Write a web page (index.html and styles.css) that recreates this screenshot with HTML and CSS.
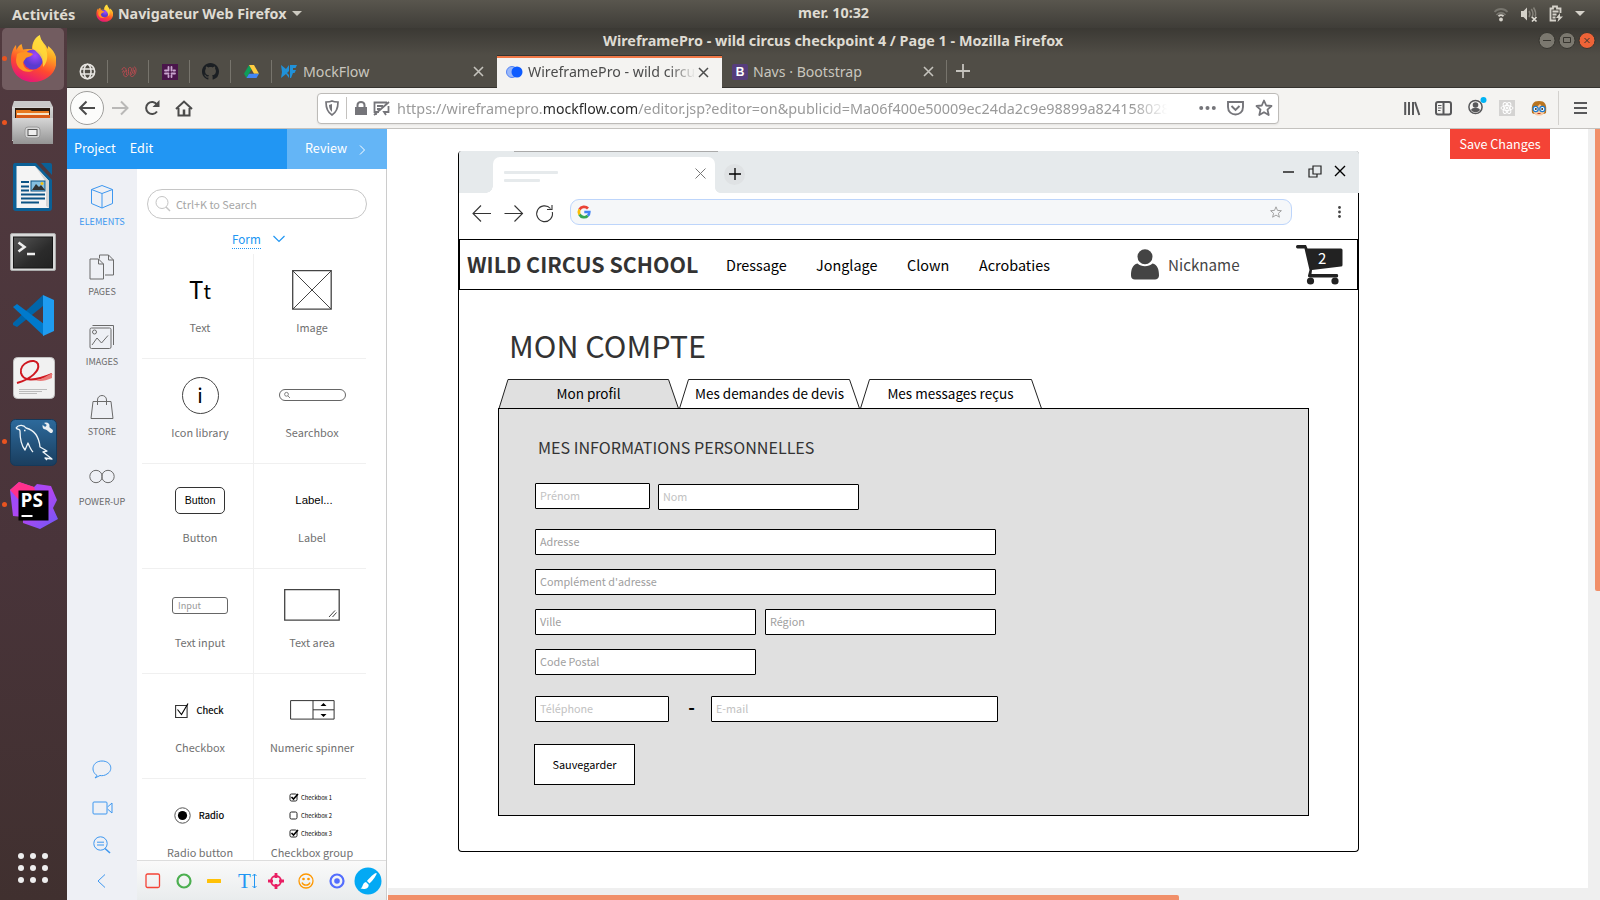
FILE: index.html
```html
<!DOCTYPE html>
<html lang="fr">
<head>
<meta charset="utf-8">
<title>WireframePro</title>
<link rel="stylesheet" href="styles.css">
</head>
<body>
<svg width="0" height="0" class="defs">
  <defs>
    <linearGradient id="fx" x1="0.7" y1="0" x2="0.3" y2="1"><stop offset="0" stop-color="#fff44f"/><stop offset=".35" stop-color="#ffa722"/><stop offset=".65" stop-color="#ff4a2e"/><stop offset="1" stop-color="#e3127f"/></linearGradient>
    <radialGradient id="fxg" cx=".6" cy=".3"><stop offset="0" stop-color="#a347ff"/><stop offset="1" stop-color="#5a3bd0"/></radialGradient>
    <linearGradient id="ps" x1="0" y1="0" x2="1" y2="1"><stop offset="0" stop-color="#8a50ff"/><stop offset=".5" stop-color="#b345f1"/><stop offset="1" stop-color="#6a5af8"/></linearGradient>
    <linearGradient id="grey" x1="0" y1="0" x2="0" y2="1"><stop offset="0" stop-color="#d6d6d6"/><stop offset="1" stop-color="#949494"/></linearGradient>
    <linearGradient id="term" x1="0" y1="0" x2="1" y2="1"><stop offset="0" stop-color="#555"/><stop offset=".6" stop-color="#2b2b2b"/><stop offset="1" stop-color="#222"/></linearGradient>
    <linearGradient id="sea" x1="0" y1="0" x2="0" y2="1"><stop offset="0" stop-color="#2d6a9c"/><stop offset="1" stop-color="#1a3e5f"/></linearGradient>
    <symbol id="firefox" viewBox="0 0 46 48">
      <path fill="url(#fx)" d="M23 48C10 48 1 38.500 1 26C1 20 3 14 6 11l.5 5c1-3 3-5 5-6l1.500 5.500c3-1 6-.5 9-.5c0-6 3-12 8-14c0 4 3 7 6 11l1.500 3 .8-3c5 4 8.200 9 8.200 15c0 12-10 21-23.500 21z"/>
      <circle cx="23" cy="25.500" r="10" fill="url(#fxg)"/>
      <path fill="#ff9422" d="M7 20c3-2 10-3 16 0c-1 2-5 3-7 4c-1 2-3 3-3 5c1 6 6 8 11 7c-8 5-18-1-18-10z"/>
      <path fill="#ffdc3c" d="M30 2c0 5 6 9 7 17c1 6-1 11-4 14c1-8-4-14-10-18c-1-5 2-11 7-13z" opacity=".85"/>
    </symbol>
  </defs>
</svg>

<header class="topbar">
  <span class="activities">Activités</span>
  <svg class="mini-fox" width="17" height="18"><use href="#firefox"/></svg>
  <span class="app">Navigateur Web Firefox</span>
  <svg width="10" height="6"><path d="M0 0h10l-5 5z" fill="#ccc9c0"/></svg>
  <span class="clock">mer. 10:32</span>
  <div class="tray">
    <svg width="16" height="16" viewBox="0 0 16 16" fill="none" stroke-width="1.800"><path stroke="#77756e" d="M1.500 6c3.500-4 9.500-4 13 0M3.500 9c2.500-3 6.500-3 9 0"/><path stroke="#d5d2ca" d="M5.500 10.200c1.500-1.300 3.500-1.300 5 0"/><circle cx="8" cy="13.500" r="1.900" fill="#d5d2ca"/></svg>
    <svg width="18" height="16" viewBox="0 0 18 16"><path fill="#d5d2ca" d="M1 5h2.500L7 1.500v13L3.500 11H1z"/><path fill="none" stroke="#85827a" stroke-width="1.500" d="M9 5c1.300 2 1.300 4 0 6M11.300 3c2 3 2 6.500 0 9M13.500 1.500c2.500 4 2.500 7 1.500 9"/><path stroke="#e0ddd5" stroke-width="1.700" d="M12 11l4.500 4.500m0-4.500L12 15.500"/></svg>
    <svg width="14" height="17" viewBox="0 0 14 17"><path fill="none" stroke="#d5d2ca" stroke-width="1.800" d="M7 15.500H1.500v-12H4V1.500h4v2h3.500V8M3.500 6.500h6M3.500 9.500h4M3.500 12.500h3"/><path fill="#d5d2ca" d="M11 8l-4 5h2.500L8.500 17 14 11.500h-3z"/></svg>
    <svg width="10" height="6"><path d="M0 0h10l-5 5z" fill="#d5d2ca"/></svg>
  </div>
</header>

<div class="desktop">
<nav class="dock">
  <div class="slot fox on"><svg width="46" height="48"><use href="#firefox"/></svg></div>
  <div class="slot files on"><svg width="44" height="46" viewBox="0 0 44 46"><path fill="#c9c9c9" d="M3 1h36l3 6v34H1V7z"/><path fill="url(#grey)" d="M1 7h41v33H1z"/><path fill="#2b1c12" d="M4 8h35v10H4z"/><path fill="#e8781e" d="M5 10h14l2 1h17v4H5z"/><path fill="#f6e3c6" d="M6 13h32v2H6z"/><path fill="#d95b17" d="M5 15h34v3H5z"/><path fill="url(#grey)" d="M2 18h40v26H2z"/><rect x="14" y="27" width="15" height="11" rx="3" fill="#d6d6d6" stroke="#999"/><rect x="17" y="29.500" width="9" height="6" fill="#eee" stroke="#555"/></svg></div>
  <div class="slot writer"><svg width="42" height="50" viewBox="0 0 42 50"><path fill="#0b6096" d="M3 1h21l16 17v28q0 3-3 3H4q-3 0-3-3V4q0-3 2-3z"/><path fill="#0b6096" d="M29 1h9q2 0 2 2v10z"/><path fill="#f4f4f4" d="M4.500 4H23l14 15v27H4.500z"/><path fill="#d4d4d4" d="M23 4l14 15v27l-3-2V20z"/><g stroke="#0b5384" stroke-width="2"><path d="M9 20h8M9 24.500h8M9 28.500h8M9 32.500h24M9 36.500h24M9 40.500h18"/></g><rect x="19" y="19" width="14" height="10" fill="#85bfe0" stroke="#0b5384"/><path fill="#333" d="M20 28l4-6 3 3 2-2 4 5z"/><circle cx="30" cy="21.500" r="1.500" fill="#f5c211"/></svg></div>
  <div class="slot term"><svg width="46" height="39" viewBox="0 0 46 39"><rect x=".5" y=".5" width="45" height="37" rx="1.500" fill="#d9d9d9" stroke="#aaa"/><rect x="3.500" y="4" width="39" height="31" fill="url(#term)" stroke="#161616"/><path fill="none" stroke="#eee" stroke-width="2.600" d="M8.500 9.500l6 4.500-6 4.500M17 21h8"/></svg></div>
  <div class="slot code"><svg width="43" height="43" viewBox="0 0 43 43"><path fill="#0065a9" d="M1 29l30-28v11L5 33l-4-2z"/><path fill="#007acc" d="M1 13l4-3 27 20v12z"/><path fill="#1f9cf0" d="M31 1l11 5v31l-11 5z"/></svg></div>
  <div class="slot reader"><svg width="42" height="43" viewBox="0 0 42 43"><rect x=".5" y=".5" width="41" height="41" rx="4" fill="#f1f1f1" stroke="#c2c2c2"/><path fill="none" stroke="#cf1820" stroke-width="2" d="M4 26c14-4 23-12 21-19c-3-7-19-1-17 9c2 8 12 9 31 1"/><path fill="#ea7a78" d="M22 23c7 0 13-5 17-7v5c-7 3-12 4-17 2z"/><path stroke="#bbb" d="M6 32.500h28M6 34.500h23M6 36.500h18"/></svg></div>
  <div class="slot sql on"><svg width="47" height="47" viewBox="0 0 47 47"><rect x=".5" y=".5" width="46" height="46" rx="5" fill="url(#sea)" stroke="#15395a"/><path fill="none" stroke="#eef4f8" stroke-width="1.300" stroke-linejoin="round" d="M6 9c3-4 8-3 10 0c8 2 13 9 14 19l7 4-4 1 9 7-7-1 2 2M6 9c2 2 4 1 4 3c0 8 1 14 5 19l3-7c2 5 3 7 5 9M14 11.500h1.500"/><path stroke="#e9eef2" stroke-width="4" stroke-linecap="round" d="M36 8l5 4"/><circle cx="36" cy="7" r="3.500" fill="#e9eef2"/><path stroke="#2d6a9c" stroke-width="2.500" d="M32 4l4 3"/></svg></div>
  <div class="slot storm on"><svg width="49" height="49" viewBox="0 0 49 49"><path fill="url(#ps)" d="M1 9L10 1l15 5 3-3 14 2 6 14-4 8 5 11-18 10-17-6v-6l-10-1z"/><path fill="#ff318c" d="M1 9L10 1l15 5 2 6-18 6z"/><rect x="9.500" y="9.500" width="30" height="30"/><path stroke="#fff" stroke-width="2" d="M12.500 35h11"/><text x="11.500" y="26" class="ps-text">PS</text></svg></div>
  <svg class="grid-dots" width="32" height="32" viewBox="0 0 32 32" fill="#eee"><circle cx="4" cy="4" r="3"/><circle cx="16" cy="4" r="3"/><circle cx="28" cy="4" r="3"/><circle cx="4" cy="16" r="3"/><circle cx="16" cy="16" r="3"/><circle cx="28" cy="16" r="3"/><circle cx="4" cy="28" r="3"/><circle cx="16" cy="28" r="3"/><circle cx="28" cy="28" r="3"/></svg>
</nav>

<main class="window">
  <div class="titlebar">
    <span class="wtitle">WireframePro - wild circus checkpoint 4 / Page 1 - Mozilla Firefox</span>
    <div class="wbtns"><svg width="58" height="20" viewBox="0 0 58 20"><circle cx="9" cy="9.500" r="8" fill="#7b786f" stroke="#36352f"/><circle cx="29" cy="9.500" r="8" fill="#7b786f" stroke="#36352f"/><circle cx="49" cy="9.500" r="8" fill="#ee6337" stroke="#36352f"/><path fill="none" stroke="#37352f" d="M5 9.500h8M25.500 6.500h7v5h-7zM46.500 7l5 5m0-5l-5 5"/></svg></div>
  </div>

  <div class="tabs">
    <div class="pin"><svg width="17" height="17" viewBox="0 0 17 17" fill="none" stroke="#e8e6e2" stroke-width="1.600"><circle cx="8.500" cy="8.500" r="7.200"/><ellipse cx="8.500" cy="8.500" rx="3.500" ry="7.200"/><path d="M2 6h13M2 11h13"/></svg></div>
    <div class="pin"><svg width="16" height="12" viewBox="0 0 16 12" fill="none" stroke="#b84a50" stroke-width="1"><path d="M1 4c0-3 4-3 4-.5S1.500 7 3 9.500s4 .5 4.500-2S6.500 2 8.500 1.500s2.500 2 1.500 4-1.500 4.500.5 5 4.500-3 4.500-6-1-3.500-2-3.500M1.500 6.500C2 4 3.500 4 3 6M5.500 9c0-2 .5-3 0-5M10 9c1-2 3-4 2-7.500M12.500 8c1-1 1-3 1-4"/></svg></div>
    <div class="pin"><svg width="16" height="16" viewBox="0 0 16 16"><path fill="#4a154b" d="M0 0h16v16H0z"/><g fill="none" stroke="#c9a6cf" stroke-width="1.800" stroke-linecap="round"><path d="M6.500 3v3.500M3 6.500h2M9.500 3v3.500M11.500 6.500H13M3 9.500h3.500M6.500 11.500V13M9.500 9.500H13M9.500 11.500V13"/></g></svg></div>
    <div class="pin"><svg width="17" height="17" viewBox="0 0 16 16"><path fill="#1b1f23" d="M8 0C3.580 0 0 3.580 0 8c0 3.540 2.290 6.530 5.470 7.590.4.070.55-.17.55-.38 0-.19-.01-.82-.01-1.490-2.010.37-2.530-.49-2.690-.94-.09-.23-.48-.94-.82-1.130-.28-.15-.68-.52-.01-.53.630-.01 1.080.58 1.230.82.720 1.210 1.870.87 2.330.66.070-.52.28-.87.510-1.070-1.780-.2-3.640-.89-3.640-3.950 0-.87.31-1.590.82-2.150-.08-.2-.36-1.020.08-2.120 0 0 .67-.21 2.200.82.640-.18 1.320-.27 2-.27s1.360.09 2 .27c1.530-1.040 2.200-.82 2.200-.82.440 1.100.16 1.920.08 2.120.510.56.82 1.270.82 2.150 0 3.070-1.870 3.750-3.650 3.950.29.25.54.73.54 1.480 0 1.070-.01 1.930-.01 2.200 0 .21.15.46.55.38A8.010 8.010 0 0 0 16 8c0-4.420-3.580-8-8-8z"/></svg></div>
    <div class="pin"><svg width="15" height="13" viewBox="0 0 15 13"><path fill="#0f9d58" d="M5 0l2.500 4.300L2.500 13 0 8.700z"/><path fill="#ffcd40" d="M5 0h5l5 8.700h-5z"/><path fill="#4285f4" d="M5 8.700h10L12.500 13h-10z"/></svg></div>
    <div class="tab"><svg width="17" height="15" viewBox="0 0 17 15"><path fill="#2091d9" d="M0 1l5 4 3-4v6L6 9l2 2v3L5 10l-5 4 1-6zM9 1h7l-1.500 3H12v2h3l-1.500 3H12l-2 5H9z"/></svg><span class="tlabel">MockFlow</span><svg class="close" width="11" height="11"><path stroke="#c5c3bd" stroke-width="1.600" d="M1 1l9 9m0-9l-9 9"/></svg></div>
    <div class="tab active"><svg width="17" height="12" viewBox="0 0 17 12"><circle cx="6" cy="6" r="5.500" fill="#9ab8fa" stroke="#5484f5"/><circle cx="11" cy="6" r="5.500" fill="#0d5bff"/></svg><span class="tlabel">WireframePro - wild circu</span><svg class="close" width="11" height="11"><path stroke="#4d4d4d" stroke-width="1.500" d="M1 1l9 9m0-9l-9 9"/></svg></div>
    <div class="tab nav"><span class="bs">B</span><span class="tlabel">Navs · Bootstrap</span><svg class="close" width="11" height="11"><path stroke="#c5c3bd" stroke-width="1.600" d="M1 1l9 9m0-9l-9 9"/></svg></div>
    <svg class="plus" width="14" height="14"><path stroke="#c5c3bd" stroke-width="1.800" d="M7 0v14M0 7h14"/></svg>
  </div>

  <div class="toolbar">
    <span class="back"><svg width="18" height="16" fill="none" stroke="#4b4b4b" stroke-width="2"><path d="M17 8H2M8.500 1.500L2 8l6.500 6.500"/></svg></span>
    <svg class="fwd" width="18" height="16" fill="none" stroke="#b9b8b7" stroke-width="2"><path d="M0 8h15.500M9 1.500L15.500 8 9 14.500"/></svg>
    <svg class="reload" width="16" height="16" fill="none" stroke="#4b4b4b" stroke-width="2"><path d="M13 11.500A6 6 0 1 1 13 4.500"/><path fill="#4b4b4b" stroke="none" d="M15.500 0v7h-7z"/></svg>
    <svg class="home" width="18" height="17" fill="none" stroke="#4b4b4b" stroke-width="2"><path d="M1 9l8-7.500L17 9M3.500 8v7.500h11V8"/><path stroke-width="2.500" d="M9 15.500V9.500"/></svg>
    <div class="url">
      <svg class="u-shield" width="14" height="16" fill="none" stroke="#75757a" stroke-width="1.700"><path d="M7 1c2 1 4 1 6 1c0 6-1 10-6 13C2 12 1 8 1 2c2 0 4 0 6-1z"/><path fill="#75757a" stroke="none" d="M7 4v8c-2-2-3-4-3-7z"/></svg>
      <i class="u-sep"></i>
      <svg class="u-lock" width="12" height="14"><path fill="#75757a" d="M0 6h12v8H0z"/><path fill="none" stroke="#75757a" stroke-width="2" d="M2.500 7V4a3.500 3 0 0 1 7 0v3"/></svg>
      <svg class="u-perm" width="17" height="15" fill="none" stroke="#75757a" stroke-width="1.800"><path d="M6 11H3v3M3 11H1.500V1.500H14M15.500 5v6H11l2 3M4 5h6M4 8h3M1 14L16 1"/></svg>
      <span class="utext">https://wireframepro.<b>mockflow.com</b><span class="path">/editor.jsp?editor=on&amp;publicid=Ma06f400e50009ec24da2c9e98899a824158028</span></span>
      <svg class="u-dots" width="17" height="4" fill="#75757a"><circle cx="2.200" cy="2" r="2"/><circle cx="8.500" cy="2" r="2"/><circle cx="14.800" cy="2" r="2"/></svg>
      <svg class="u-pocket" width="17" height="15" fill="none" stroke="#75757a" stroke-width="1.900"><path d="M1 1h15v5c0 10-15 10-15 0z"/><path d="M4.500 5l4 4 4-4"/></svg>
      <svg class="u-star" width="18" height="18" viewBox="0 0 18 18" fill="none" stroke="#75757a" stroke-width="1.800"><path stroke-linejoin="round" d="M9 1.500l2.200 5 5.300.5-4 3.600 1.200 5.400L9 13.200 4.300 16l1.200-5.400-4-3.600 5.300-.5z"/></svg>
    </div>
    <svg class="t-lib" width="16" height="15" stroke="#58585a" stroke-width="2"><path d="M1.200 1v13M5 1v13M9 1v13M11 1l4.300 13"/></svg>
    <svg class="t-side" width="17" height="15" fill="none" stroke="#58585a" stroke-width="2"><rect x="1" y="1" width="15" height="12.500" rx="2"/><path d="M8.500 1v12"/><path stroke-width="1" d="M3 4.500h3.500M3 7h3.500M3 9.500h2.500"/></svg>
    <svg class="t-acc" width="20" height="20" viewBox="0 0 20 20"><circle cx="8.500" cy="11" r="6.600" fill="none" stroke="#58585a" stroke-width="1.500"/><circle cx="8.500" cy="9" r="2.800" fill="#58585a"/><path fill="#58585a" d="M4 14c1-3 8-3 9 0c-2 3-7 3-9 0z"/><circle cx="16.500" cy="4" r="3" fill="#00b3f4"/></svg>
    <svg class="t-react" width="16" height="16" viewBox="0 0 16 16" fill="none" stroke="#fff"><path fill="#d4d3d2" stroke="none" d="M0 0h16v16H0z"/><ellipse cx="8" cy="8" rx="6" ry="2.500"/><ellipse cx="8" cy="8" rx="6" ry="2.500" transform="rotate(60 8 8)"/><ellipse cx="8" cy="8" rx="6" ry="2.500" transform="rotate(120 8 8)"/><circle cx="8" cy="8" r="1" fill="#fff"/></svg>
    <svg class="t-face" width="16" height="16" viewBox="0 0 16 16"><path fill="#b9741f" d="M1 13C0 4 2 1 8 1s8 3 7 12l-2 1H3z"/><path fill="#f8c9a0" d="M2.500 8c3-1 5-2 6.500-4 1 2 3 3 4.500 4v4c-1 3-3 3.500-5.500 3.500s-4.500-.5-5.500-3.500z"/><circle cx="4.600" cy="9" r="2.600" fill="#fff" stroke="#1c7bd0" stroke-width="1.300"/><circle cx="11.400" cy="9" r="2.600" fill="#fff" stroke="#1c7bd0" stroke-width="1.300"/><circle cx="4.800" cy="9" r="1" fill="#333"/><circle cx="11.200" cy="9" r="1" fill="#333"/><path stroke="#c0392b" d="M6.500 13.500h3"/></svg>
    <i class="t-sep"></i>
    <svg class="t-menu" width="13" height="12" stroke="#58585a" stroke-width="2"><path d="M0 1h13M0 6h13M0 11h13"/></svg>
  </div>

  <div class="page">
    <aside class="editor">
      <div class="menubar"><span>Project</span><span>Edit</span><div class="review">Review<svg width="7" height="10" fill="none" stroke="#fff"><path d="M1 .5L5.500 5 1 9.500"/></svg></div></div>
      <div class="panes">
        <nav class="rail">
          <div class="ritem blue"><svg width="24" height="26" viewBox="0 0 24 26"><path d="M12 1.500l10.500 4v14L12 24 1.500 19.500v-14zM1.500 5.500L12 9.500l10.500-4M12 9.500V24"/></svg>ELEMENTS</div>
          <div class="ritem"><svg width="26" height="26" viewBox="0 0 26 26"><path d="M1 5h8.500l5 5v15H1zM9.500 5v5h5M10.500 4.500V1h9l5 5v15H16M19.500 1v5h5"/></svg>PAGES</div>
          <div class="ritem"><svg width="26" height="26" viewBox="0 0 26 26"><rect x="1" y="4" width="21" height="20.500" rx="1.500"/><path d="M3.500 1.500H24.500V21M3 21l5-7 4.500 5L19 11.500"/><circle cx="5.500" cy="8" r="2"/></svg>IMAGES</div>
          <div class="ritem"><svg width="24" height="26" viewBox="0 0 24 26"><path d="M3 7.500h18l2 17H1zM7.500 11V6c0-6 9-6 9 0v5"/></svg>STORE</div>
          <div class="ritem"><svg width="26" height="26" viewBox="0 0 26 26"><circle cx="7" cy="12.500" r="6.200"/><circle cx="19" cy="12.500" r="6.200"/></svg>POWER-UP</div>
          <div class="tools">
            <svg width="20" height="19" viewBox="0 0 20 19"><path d="M5 15.500C-2 11 .5 1 10 1s11.500 9.500 5 13c-2 1.500-5 2-7 1.500L3 18z"/></svg>
            <svg width="21" height="14" viewBox="0 0 21 14"><rect x="1" y="1" width="14" height="12" rx="1"/><path d="M15.500 6l4.500-4v10l-4.500-4"/></svg>
            <svg width="18" height="18" viewBox="0 0 18 18"><circle cx="7.500" cy="7.500" r="6.700"/><path d="M4 6.200h7M4 9h7"/><path stroke-width="1.600" d="M12 12.500l5 4.500"/></svg>
            <svg width="9" height="14" viewBox="0 0 9 14"><path d="M8 .5L1 7l7 6.500"/></svg>
          </div>
        </nav>
        <section class="palette">
          <div class="search"><svg width="16" height="16" fill="none" stroke="#c4c4c4"><circle cx="7" cy="6.500" r="6"/><path stroke-width="1.500" d="M11 11l4 4"/></svg>Ctrl+K to Search</div>
          <div class="cat"><span>Form</span><svg width="12" height="8" fill="none" stroke="#2196f3" stroke-width="1.200"><path d="M.5 1L6 6.500 11.500 1"/></svg></div>
          <div class="cells">
            <div class="cell"><div class="pic tt">T<small>t</small></div>Text</div>
            <div class="cell"><div class="pic"><svg width="40" height="40" fill="none" stroke="#444"><path stroke-width="1.300" d="M.7.700h38.500v38.500H.7z"/><path d="M1 1l38 38M39 1L1 39"/></svg></div>Image</div>
            <div class="cell"><div class="pic"><span class="info">i</span></div>Icon library</div>
            <div class="cell"><div class="pic"><svg width="67" height="12" fill="none" stroke="#666"><rect x=".5" y=".5" width="66" height="11" rx="5.500"/><circle cx="7.500" cy="5.300" r="1.900" stroke-width=".8"/><path stroke-width=".8" d="M9 7l2 2"/></svg></div>Searchbox</div>
            <div class="cell"><div class="pic"><span class="btn">Button</span></div>Button</div>
            <div class="cell"><div class="pic lab">Label...</div>Label</div>
            <div class="cell"><div class="pic"><span class="inp">Input</span></div>Text input</div>
            <div class="cell"><div class="pic"><svg width="56" height="32" fill="none" stroke="#444"><path stroke-width="1.300" d="M.7.700h54.500v30.500H.7z"/><path d="M45 28l6-6.500M48.500 28l4-4.500"/></svg></div>Text area</div>
            <div class="cell"><div class="pic chk"><svg width="14" height="15" fill="none" stroke="#333" stroke-width="1.100"><path d="M.6 2.500h11.500v12H.6z"/><path stroke="#000" d="M2.500 6.500l4 5L13 .5"/></svg>Check</div>Checkbox</div>
            <div class="cell"><div class="pic"><svg width="45" height="20" fill="none" stroke="#333"><path d="M.6.600h43.500v18.500H.6zM23 .5v18.500M23 9.800h21"/><path fill="#000" stroke="none" d="M30.500 6h6l-3-3zM30.500 14h6l-3 3z"/></svg></div>Numeric spinner</div>
            <div class="cell"><div class="pic chk"><svg width="17" height="17"><circle cx="8.500" cy="8.500" r="7.700" fill="none" stroke="#555"/><circle cx="8.500" cy="8.500" r="4.600"/></svg>Radio</div>Radio button</div>
            <div class="cell"><div class="pic group">
              <span><svg width="10" height="9"><rect x="1" y="1" width="7" height="7" rx="1.500" fill="none" stroke="#222"/><path fill="none" stroke="#000" stroke-width="1.600" d="M2.500 4l2 2L9 1"/></svg>Checkbox 1</span>
              <span><svg width="10" height="9"><rect x="1" y="1" width="7" height="7" rx="1.500" fill="none" stroke="#222"/></svg>Checkbox 2</span>
              <span><svg width="10" height="9"><rect x="1" y="1" width="7" height="7" rx="1.500" fill="none" stroke="#222"/><path fill="none" stroke="#000" stroke-width="1.600" d="M2.500 4l2 2L9 1"/></svg>Checkbox 3</span>
            </div>Checkbox group</div>
          </div>
          <div class="quick">
            <svg width="16" height="16" fill="none" stroke="#f44336" stroke-width="1.300"><rect x="1" y="1" width="13.500" height="13.500" rx="1.500"/></svg>
            <svg width="16" height="16" fill="none" stroke="#4caf50" stroke-width="2.200"><circle cx="8" cy="8" r="6.500"/></svg>
            <svg width="14" height="4"><rect width="14" height="4" rx=".5" fill="#ffc107"/></svg>
            <span class="bigt">T<svg width="5" height="16" fill="none" stroke="#2196f3"><path d="M2.500 1v14M.5 3l2-2 2 2M.5 13l2 2 2-2"/></svg></span>
            <svg width="16" height="16" fill="none" stroke="#e91e63" stroke-width="1.800"><circle cx="8" cy="8" r="5"/><path stroke-width="2.800" d="M8 0v5M8 11V16M0 8h5M11 8H16"/></svg>
            <svg width="16" height="16" fill="none" stroke="#ff9800" stroke-width="1.300"><circle cx="8" cy="8" r="7"/><path d="M4 9.500c1 3.500 7 3.500 8 0"/><circle cx="5.500" cy="6" r=".7" fill="#ff9800"/><circle cx="10.500" cy="6" r=".7" fill="#ff9800"/></svg>
            <svg width="16" height="16" fill="none" stroke="#536dfe" stroke-width="2.200"><circle cx="8" cy="8" r="6.500"/><circle cx="8" cy="8" r="1.700" fill="#536dfe"/></svg>
            <svg width="28" height="28"><circle cx="14" cy="14" r="13.500" fill="#03a9f4"/><path fill="#fff" d="M22.500 6c1 1-4 8-7 10.500l-2.500-2.500C15.500 10.500 21.500 5 22.500 6zM12 15l2.700 2.700c0 4-4 5-8.200 3.800 2.500-1 2-6 5.500-6.500z"/></svg>
          </div>
        </section>
      </div>
    </aside>

    <section class="stage">
      <span class="save">Save Changes</span>
      <div class="mock">
        <div class="mhead">
          <i class="edge"></i>
          <div class="mtab"><div class="lines"><i></i><i></i></div><svg width="11" height="11" stroke="#777"><path d="M.5.500l10 10m0-10l-10 10"/></svg></div>
          <span class="mplus"><svg width="12" height="12" stroke="#000" stroke-width="1.300"><path d="M6 0v12M0 6h12"/></svg></span>
          <div class="mwin"><svg width="65" height="14" fill="none" stroke="#222" stroke-width="1.200"><path stroke-width="1.500" d="M1 8h11"/><path d="M31 2h8v8h-8zM31 5h-4v8h8v-3"/><path stroke="#000" stroke-width="1.400" d="M53 2l10 10m0-10L53 12"/></svg></div>
        </div>
        <div class="mbar">
          <svg class="arrows" width="78" height="20" viewBox="0 0 78 20" fill="none" stroke="#333" stroke-width="1.100"><path d="M19 9.500H1M9 1.500l-8 8 8 8M32.500 9.500h18M42.500 1.500l8 8-8 8"/><path d="M78.500 4.500A7.900 7.900 0 1 0 80.300 8M80 1v4.500h-5"/></svg>
          <div class="maddr"><svg width="14" height="14" viewBox="0 0 14 14" fill="none" stroke-width="2.700"><path stroke="#ea4335" d="M2.500 4.500A5.300 5.300 0 0 1 11 3.500"/><path stroke="#fbbc05" d="M2.500 9.500a5.300 5.300 0 0 1 0-5"/><path stroke="#34a853" d="M10.800 10.800A5.300 5.300 0 0 1 2.500 9.500"/><path stroke="#4285f4" d="M7.300 7h5c0 1.800-.5 3-1.500 3.800"/></svg><svg width="12" height="12" viewBox="0 0 12 12" fill="none" stroke="#999" stroke-width=".9"><path d="M6 .8l1.500 3.600 3.900.3-3 2.600 1 3.900L6 9.100l-3.400 2.100 1-3.900-3-2.600 3.900-.3z"/></svg></div>
          <svg width="4" height="14" fill="#444"><circle cx="1.500" cy="2.500" r="1.400"/><circle cx="1.500" cy="7" r="1.400"/><circle cx="1.500" cy="11.500" r="1.400"/></svg>
        </div>
        <div class="mnav">
          <strong>WILD CIRCUS SCHOOL</strong>
          <a class="l1">Dressage</a><a class="l2">Jonglage</a><a class="l3">Clown</a><a class="l4">Acrobaties</a>
          <svg class="user" width="28" height="31" viewBox="0 0 28 31" fill="#444"><circle cx="14" cy="7.800" r="7.500"/><path d="M6.500 14.500c4 3.500 11 3.500 15 0 5 1 6.500 6 6.500 12 0 2.500-2 4-4 4H4c-2.500 0-4-1.500-4-4 0-6 1.500-11 6.500-12z"/></svg>
          <span class="nick">Nickname</span>
          <div class="cart"><svg width="48" height="41" viewBox="0 0 48 41" fill="#222"><path d="M1.500 0H10l1.500 3.500H45q1.500 0 1.500 1.500v15q0 1.500-1.500 1.500L16 25l-.5 4H41q1.200 0 1.200 1.700T41 32.500H14q-2.500 0-2-2l1.500-5.500L8.500 3.500h-7Q0 3.500 0 1.800T1.500 0z"/><circle cx="14.500" cy="36" r="3.600"/><circle cx="39" cy="36" r="3.600"/></svg><span class="count">2</span></div>
        </div>
        <h1>MON COMPTE</h1>
        <div class="mtabs">
          <div class="trap"><svg width="183" height="30" fill="#e0e0e0" stroke="#222"><path d="M1 29.500L10 .5h160.500L180.500 29.500"/></svg><span>Mon profil</span></div>
          <div class="trap"><svg width="183" height="30" fill="#fff" stroke="#222"><path d="M.5 29.500L9.500.5h161L180.500 29.500"/></svg><span>Mes demandes de devis</span></div>
          <div class="trap"><svg width="183" height="30" fill="#fff" stroke="#222"><path d="M.5 29.500L9.500.5h162L181.500 29.500"/></svg><span>Mes messages reçus</span></div>
        </div>
        <div class="mpanel">
          <h2>MES INFORMATIONS PERSONNELLES</h2>
          <div class="frow r1"><span class="f pale w115">Prénom</span><span class="f pale w201 low">Nom</span></div>
          <div class="frow"><span class="f w461">Adresse</span></div>
          <div class="frow"><span class="f w461">Complément d'adresse</span></div>
          <div class="frow g9"><span class="f w221">Ville</span><span class="f w231">Région</span></div>
          <div class="frow"><span class="f w221">Code Postal</span></div>
          <div class="frow r6"><span class="f pale w134">Téléphone</span><span class="dash">-</span><span class="f pale w287">E-mail</span></div>
          <span class="submit">Sauvegarder</span>
        </div>
      </div>
      <i class="vbar"><i></i></i>
      <i class="hbar"><i></i></i>
    </section>
  </div>
</main>
</div>
</body>
</html>
```
FILE: styles.css
```css
* { box-sizing: border-box; }
html, body { margin: 0; height: 900px; overflow: hidden; }
body { width: 1600px; font: 14.4px/20px "Noto Sans", "Open Sans", sans-serif; background: #fff; display: flex; flex-direction: column; }
svg { display: block; flex: none; overflow: visible; }
.defs { position: absolute; }
i { display: block; }

/* system bar */
.topbar { position: relative; height: 28px; flex: none; display: flex; align-items: center; background: linear-gradient(#59564e, #3f3d38); color: #dfdbd2; font-weight: 600; }
.activities { margin: -1px 0 0 12px; width: 83px; font-size: 14.6px; font-weight: 700; }
.mini-fox { margin: -2px 5px 0 1px; }
.app { width: 174px; margin-top: -1px; font-weight: 700; font-size: 14.3px; }
.clock { position: absolute; left: 798px; top: 3px; font-weight: 700; font-size: 14.3px; line-height: 20px; }
.tray { margin-left: auto; margin-right: 15px; display: flex; align-items: center; gap: 12px; margin-top: -1px; }
.tray svg:nth-child(2) { margin: 0 0 0 -1px; }
.tray svg:nth-child(3) { margin-left: -1px; }

.desktop { display: flex; height: 872px; }

/* launcher */
.dock { width: 67px; height: 872px; flex: none; background: linear-gradient(#513a3f, #49343a 60%, #40302f); display: flex; flex-direction: column; padding-left: 2px; }
.slot { position: relative; width: 62px; height: 62px; margin-bottom: 1px; display: flex; align-items: center; justify-content: center; }
.slot.on::before { content: ""; position: absolute; left: 0; top: 50%; width: 5px; height: 5px; margin-top: -3px; border-radius: 50%; background: #e95420; }
.fox { background: #725c60; border-radius: 5px; }
.fox svg { margin-top: -2px; }
.files { margin-top: 1px; }
.writer { margin-top: 1px; }
.term { margin-top: 2px; }
.sql { margin-top: 1px; }
.reader svg { margin-left: 1px; }
.ps-text { font: 700 19px "Open Sans", sans-serif; fill: #fff; }
.grid-dots { margin: auto 0 16px 15px; }

/* window frame */
.window { width: 1533px; height: 872px; }
.titlebar { position: relative; height: 27px; background: linear-gradient(#3b3934, #504d46); display: flex; align-items: center; }
.wtitle { margin-left: 536px; color: #dfdbd2; font-weight: 700; font-size: 14.4px; margin-top: -1px; }
.wbtns { margin-left: auto; margin-right: 4px; margin-top: -1px; }
.tabs { height: 33px; background: #504d46; border-bottom: 1px solid #35332f; display: flex; align-items: center; }
.pin { width: 41px; height: 32px; display: flex; align-items: center; justify-content: center; position: relative; padding-top: 1px; }
.pin:first-child { padding-right: 1px; }
.pin::after, .nav::after { content: ""; position: absolute; right: 0; top: 5px; width: 1px; height: 23px; background: #77746c; }
.tab { position: relative; width: 225px; height: 33px; display: flex; align-items: center; padding: 1px 0 0 9px; color: #c9c6be; }
.tab .tlabel { margin-left: 5px; width: 166px; white-space: nowrap; font-size: 14.2px; }
.tab .close { margin-left: 4px; }
.active { background: #f4f3f1; color: #4c4c4c; height: 33px; align-self: flex-start; box-shadow: 0 -1px 0 #35332f, inset 0 2px 0 #f07746; margin-top: 1px; padding-top: 0; padding-bottom: 1px; }
.active .tlabel { mask-image: linear-gradient(90deg, #000 85%, transparent 101%); }
.nav .tlabel { font-size: 14.1px; }
.bs { width: 16px; height: 16px; margin-left: 1px; background: #563d7c; border-radius: 2px; color: #fff; font: 700 12px/16px "Liberation Sans", sans-serif; text-align: center; }
.plus { margin-left: 9px; }

.toolbar { position: relative; height: 41px; background: #f4f3f1; border-bottom: 1px solid #c4c2bf; display: flex; align-items: center; padding-left: 3px; }
.back { width: 34px; height: 34px; border: 1px solid #9f9e9c; border-radius: 50%; background: #fcfcfb; display: flex; align-items: center; justify-content: center; }
.fwd { margin-left: 8px; }
.reload { margin-left: 14px; }
.home { margin-left: 15px; margin-right: 124px; }
.url { width: 962px; height: 31px; background: #fff; border: 1px solid #bdbbb8; border-radius: 4px; display: flex; align-items: center; box-shadow: 0 1px 2px #0001; margin-right: 125px; flex: none; }
.u-shield { margin-left: 7px; }
.u-sep { width: 1px; height: 22px; background: #c4c2bf; margin: 0 8px 0 7px; }
.u-perm { margin: 0 7px 0 6px; }
.utext { color: #9a9a9a; white-space: nowrap; width: 774px; overflow: hidden; font-size: 14.4px; padding-top: 1px; mask-image: linear-gradient(90deg, #000 95%, transparent 99.5%); }
.utext b { font-weight: 400; color: #2b2b2b; font-size: 14.1px; }
.u-dots { margin-left: 28px; }
.u-pocket { margin: 0 11px; }
.t-side { margin-left: 15px; }
.t-acc { margin: -4px 0 0 15px; }
.t-react { margin-left: 12px; }
.t-face { margin-left: 16px; }
.t-sep { width: 1px; height: 34px; background: #d3d1ce; margin: 0 15px 0 11px; }

/* editor */
.page { display: flex; height: 771px; font-family: "Noto Sans CJK SC", "Noto Sans", sans-serif; background: #fff; }
.editor { width: 320px; flex: none; }
.menubar { height: 40px; background: #2196f3; color: #fff; display: flex; align-items: center; font-size: 12.6px; padding-left: 7px; gap: 14px; }
.menubar > span { margin-top: -3px; }
.review { margin-left: auto; width: 100px; height: 40px; background: #64b5f6; padding: 0 0 3px 18px; display: flex; align-items: center; gap: 12px; }
.review svg { margin-top: 4px; }
.panes { display: flex; height: 731px; }
.rail { width: 70px; background: #eef0f5; display: flex; flex-direction: column; padding-top: 15px; }
.ritem { height: 70px; display: flex; flex-direction: column; align-items: center; font-size: 9.1px; line-height: 14px; color: #6b6b6b; gap: 4px; }
.ritem svg, .tools svg { fill: none; stroke: currentColor; }
.ritem svg { height: 26px; }
.blue, .tools { color: #3d97f0; }
.tools { margin-top: auto; margin-bottom: 12px; display: flex; flex-direction: column; align-items: center; }
.tools svg:nth-child(2) { margin: 22px 0 21px 1px; }
.tools svg:nth-child(4) { margin: 20px 2px 0 0; }
.palette { width: 250px; height: 731px; border-right: 1px solid #ccc; display: flex; flex-direction: column; overflow: hidden; }
.search { margin: 20px 0 0 10px; width: 220px; height: 30px; border: 1px solid #c6c6c6; border-radius: 15px; display: flex; align-items: center; padding-left: 7px; gap: 5px; color: #a6a6a6; font-size: 10.85px; flex: none; }
.cat { height: 35px; flex: none; display: flex; align-items: center; padding: 5px 0 0 95px; color: #2196f3; font-size: 11.7px; gap: 12px; }
.cat span { height: 19px; line-height: 18px; border-bottom: 1px dotted #2196f3; }
.cells { margin-left: 5px; width: 225px; height: 606px; display: grid; grid-template-columns: 112px 112px; grid-auto-rows: 105px; overflow: hidden; }
.cell { display: flex; flex-direction: column; align-items: center; border-bottom: 1px solid #f0f0f0; font-size: 10.9px; line-height: 14px; color: #707070; padding: 16px 0 0 5px; }
.cell:nth-child(even) { padding-left: 4px; }
.cell:nth-child(odd) { border-right: 1px solid #f0f0f0; }
.pic { height: 40px; margin-bottom: 10px; display: flex; align-items: center; justify-content: center; color: #000; }
.tt { font-size: 24px; align-items: baseline; line-height: 38px; }
.tt small { font-size: 20px; }
.info { width: 37px; height: 37px; border: 1px solid #444; border-radius: 50%; font-size: 20px; line-height: 33px; text-align: center; }
.btn { width: 50px; height: 27px; border: 1px solid #333; border-radius: 5px; font: 10.6px/25px "Liberation Sans", sans-serif; text-align: center; }
.lab { font: 11.4px/16px "Liberation Sans", sans-serif; padding-left: 4px; }
.inp { width: 56px; height: 17px; border: 1px solid #666; border-radius: 3px; font-size: 9.2px; line-height: 14px; color: #999; padding-left: 5px; }
.chk { font-size: 9.4px; gap: 8px; padding-right: 2px; -webkit-text-stroke: .2px #000; }
.group { flex-direction: column; font-size: 5.8px; line-height: 9px; gap: 9px; }
.group span { display: flex; gap: 2px; margin-right: 3px; }
.cells .cell:nth-last-child(-n+2) { border-bottom: 0; }
.quick { height: 40px; flex: none; border-top: 1px solid #ddd; background: linear-gradient(#fafafa, #e9eced); display: flex; align-items: center; padding: 1px 0 0 8px; }
.quick > :nth-child(2) { margin-left: 15px; }
.quick > :nth-child(3) { margin-left: 15px; }
.bigt { display: flex; align-items: center; margin-left: 17px; color: #2196f3; font: 21px/24px "Liberation Serif", serif; width: 18px; gap: 1px; }
.quick > :nth-child(5) { margin-left: 12px; }
.quick > :nth-child(6) { margin-left: 14px; }
.quick > :nth-child(7) { margin-left: 15px; }
.quick > :nth-child(8) { margin-left: 9px; }

/* drawing area */
.stage { position: relative; width: 1213px; height: 771px; padding: 22px 0 0 71px; }
.save { position: absolute; left: 1063px; top: 0; width: 100px; height: 30px; background: #f44336; color: #fff; font-size: 12.6px; line-height: 30px; text-align: center; }
.vbar { position: absolute; right: 0; top: 0; width: 12px; height: 771px; background: #efefef; padding-left: 7px; }
.vbar i { height: 462px; background: #f18f69; border-radius: 0 0 0 2px; }
.hbar { position: absolute; left: 1px; bottom: 0; width: 1212px; height: 12px; background: #efefef; padding-top: 7px; }
.hbar i { width: 791px; height: 5px; background: #f18f69; border-radius: 0 2px 0 0; }

.mock { width: 901px; height: 701px; border: 1px solid #000; border-top: 0; border-radius: 4px; color: #000; }
.mhead { position: relative; height: 42px; margin: 0 -1px 0 0; background: #e6eaec; border-radius: 3px 3px 0 0; display: flex; align-items: center; }
.edge { position: absolute; left: 55px; top: 0; width: 204px; height: 1px; background: #aaa; }
.mtab { position: relative; margin-left: 34px; width: 222px; height: 36px; align-self: flex-end; background: #fff; border-radius: 7px 7px 0 0; display: flex; align-items: center; padding: 0 9px 4px 11px; justify-content: space-between; }
.mtab::before, .mtab::after { content: ""; position: absolute; bottom: 0; width: 7px; height: 7px; }
.mtab::before { left: -7px; background: radial-gradient(circle at 0 0, #e6eaec 6.5px, #fff 7px); }
.mtab::after { right: -5px; width: 5px; height: 5px; background: radial-gradient(circle at 100% 0, #e6eaec 4.5px, #fff 5px); }
.lines { display: flex; flex-direction: column; gap: 5px; margin-top: 6px; }
.lines i { width: 54px; height: 3px; background: #e6eaec; border-radius: 1px; }
.lines i + i { width: 36px; }
.mplus { width: 21px; height: 21px; margin: 4px 0 0 9px; border-radius: 50%; background: #dfe2e4; display: flex; align-items: center; justify-content: center; }
.mwin { margin: -3px 12px 0 auto; }
.mbar { height: 46px; display: flex; align-items: center; padding: 0 0 8px 13px; }
.arrows { margin-top: 3px; }
.maddr { margin: -1px 46px 0 20px; width: 722px; height: 26px; border: 1px solid #bdd5fb; border-radius: 9px; background: #f5f7f9; display: flex; align-items: center; justify-content: space-between; padding: 0 9px 0 6px; }
.mnav { width: 899px; height: 51px; border: 1px solid #000; display: flex; align-items: center; font-size: 14.4px; }
.mnav strong { margin: -1px 0 0 7px; width: 259px; font-size: 21.4px; color: #333; white-space: nowrap; }
.l1 { width: 90px; }
.l2 { width: 91px; }
.l3 { width: 72px; }
.l4 { width: 152px; }
.nick { margin-left: 9px; width: 128px; font-size: 15.2px; color: #444; margin-top: -1px; }
.cart { position: relative; margin-top: 2px; }
.count { position: absolute; left: 22px; top: 3px; color: #fff; font-size: 15px; }
.mock h1 { margin: 33px 0 0 50px; font-size: 30.5px; line-height: 44px; font-weight: 400; color: #333; }
.mtabs { display: flex; margin: 12px 0 0 39px; height: 29px; }
.trap { position: relative; width: 181px; height: 29px; text-align: center; font-size: 13.5px; line-height: 28px; }
.trap svg { position: absolute; left: 0; top: 0; }
.trap span { position: relative; }
.mpanel { position: relative; margin-left: 39px; width: 811px; height: 408px; border: 1px solid #000; background: #e0e0e0; padding-left: 36px; }
.mpanel h2 { margin: 25px 0 0 3px; font-size: 16.1px; line-height: 26px; font-weight: 400; color: #333; }
.frow { display: flex; margin-bottom: 14px; }
.r1 { margin: 23px 0 19px; gap: 8px; height: 27px; }
.g9 { gap: 9px; }
.f { height: 26px; background: #fff; border: 1px solid #000; border-radius: 1px; font-size: 10.8px; line-height: 22px; padding-left: 4px; color: #a0a0a0; }
.pale { color: #c2c2c2; }
.low { margin-top: 1px; }
.w115 { width: 115px; } .w201 { width: 201px; } .w461 { width: 461px; } .w221 { width: 221px; } .w231 { width: 231px; } .w134 { width: 134px; } .w287 { width: 287px; }
.r6 { margin: 21px 0 22px; }
.dash { width: 42px; text-align: center; font-size: 18px; font-weight: 700; line-height: 21px; padding-left: 3px; }
.submit { display: block; margin-left: -1px; width: 101px; height: 41px; background: #fff; border: 1px solid #000; font-size: 10.9px; line-height: 38px; text-align: center; }
```
